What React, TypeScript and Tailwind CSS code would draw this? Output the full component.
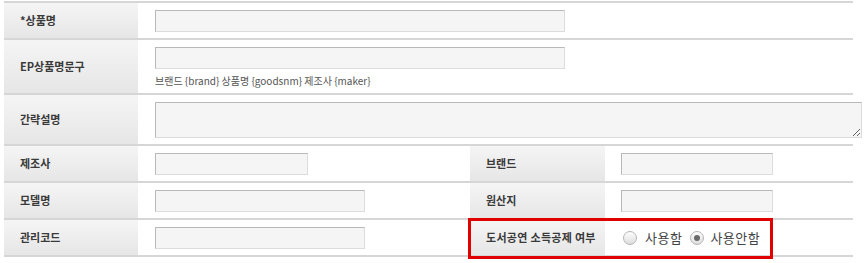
import React from "react";

const font = "font-['Noto_Sans_CJK_KR','Noto_Sans',sans-serif]";

function Label({ children, w }: { children: React.ReactNode; w: string }) {
  return (
    <div
      className={`${w} shrink-0 flex items-center pl-[16px] bg-linear-to-b from-[#f5f5f5] to-[#e6e6e6] text-[11px] font-bold text-[#3a3a3a]`}
    >
      {children}
    </div>
  );
}

function Input({ w }: { w: string }) {
  return (
    <div
      className={`${w} h-[22px] bg-[#f5f5f5] border border-t-[#b9b9b9] border-l-[#b9b9b9] border-r-[#dcdcdc] border-b-[#dcdcdc]`}
    />
  );
}

function Radio({ checked }: { checked?: boolean }) {
  return (
    <span className="w-[14px] h-[14px] rounded-full border border-[#b5b5b5] bg-linear-to-b from-[#fdfdfd] to-[#dedede] flex items-center justify-center">
      {checked && <span className="w-[6px] h-[6px] rounded-full bg-[#6a6a6a]" />}
    </span>
  );
}

export default function App() {
  return (
    <div className={`w-[865px] h-[263px] bg-white pt-[1px] ${font}`}>
      <div className="ml-[4px] w-[849px] border-t-2 border-[#d6d6d6]">
        {/* row 1 */}
        <div className="flex h-[37px] border-b-2 border-[#d6d6d6]">
          <Label w="w-[134px]">*상품명</Label>
          <div className="flex items-center pl-[17px]">
            <Input w="w-[410px]" />
          </div>
        </div>
        {/* row 2 */}
        <div className="flex h-[55px] border-b-2 border-[#d6d6d6]">
          <Label w="w-[134px]">EP상품명문구</Label>
          <div className="flex flex-col justify-center pl-[17px] gap-[5px]">
            <Input w="w-[410px]" />
            <div className="text-[10px] leading-[13px] text-[#555]">
              브랜드 {"{brand}"} 상품명 {"{goodsnm}"} 제조사 {"{maker}"}
            </div>
          </div>
        </div>
        {/* row 3 */}
        <div className="flex h-[51px] border-b-2 border-[#d6d6d6]">
          <Label w="w-[134px]">간략설명</Label>
          <div className="flex items-center pl-[17px]">
            <textarea className="block w-[707px] h-[36px] bg-[#f5f5f5] border border-t-[#b9b9b9] border-l-[#b9b9b9] border-r-[#dcdcdc] border-b-[#dcdcdc] outline-none" />
          </div>
        </div>
        {/* row 4 */}
        <div className="flex h-[37px] border-b-2 border-[#d6d6d6]">
          <Label w="w-[134px]">제조사</Label>
          <div className="w-[332px] flex items-center pl-[17px]">
            <Input w="w-[153px]" />
          </div>
          <Label w="w-[135px]">브랜드</Label>
          <div className="flex items-center pl-[16px]">
            <Input w="w-[152px]" />
          </div>
        </div>
        {/* row 5 */}
        <div className="flex h-[37px] border-b-2 border-[#d6d6d6]">
          <Label w="w-[134px]">모델명</Label>
          <div className="w-[332px] flex items-center pl-[17px]">
            <Input w="w-[210px]" />
          </div>
          <Label w="w-[135px]">원산지</Label>
          <div className="flex items-center pl-[16px]">
            <Input w="w-[152px]" />
          </div>
        </div>
        {/* row 6 */}
        <div className="relative flex h-[37px] border-b-2 border-[#d6d6d6]">
          <Label w="w-[134px]">관리코드</Label>
          <div className="w-[332px] flex items-center pl-[17px]">
            <Input w="w-[210px]" />
          </div>
          <Label w="w-[135px]">
            <span className="tracking-[0.3px]">도서공연 소득공제 여부</span>
          </Label>
          <div className="flex items-center pl-[18px] text-[13px] text-[#444] tracking-[0.5px]">
            <Radio />
            <span className="ml-[8px]">사용함</span>
            <span className="ml-[8px]">
              <Radio checked />
            </span>
            <span className="ml-[6px]">사용안함</span>
          </div>
          <div className="absolute left-[464px] top-[-2px] w-[305px] h-[41px] border-[3px] border-[#e00000] pointer-events-none" />
        </div>
      </div>
    </div>
  );
}
